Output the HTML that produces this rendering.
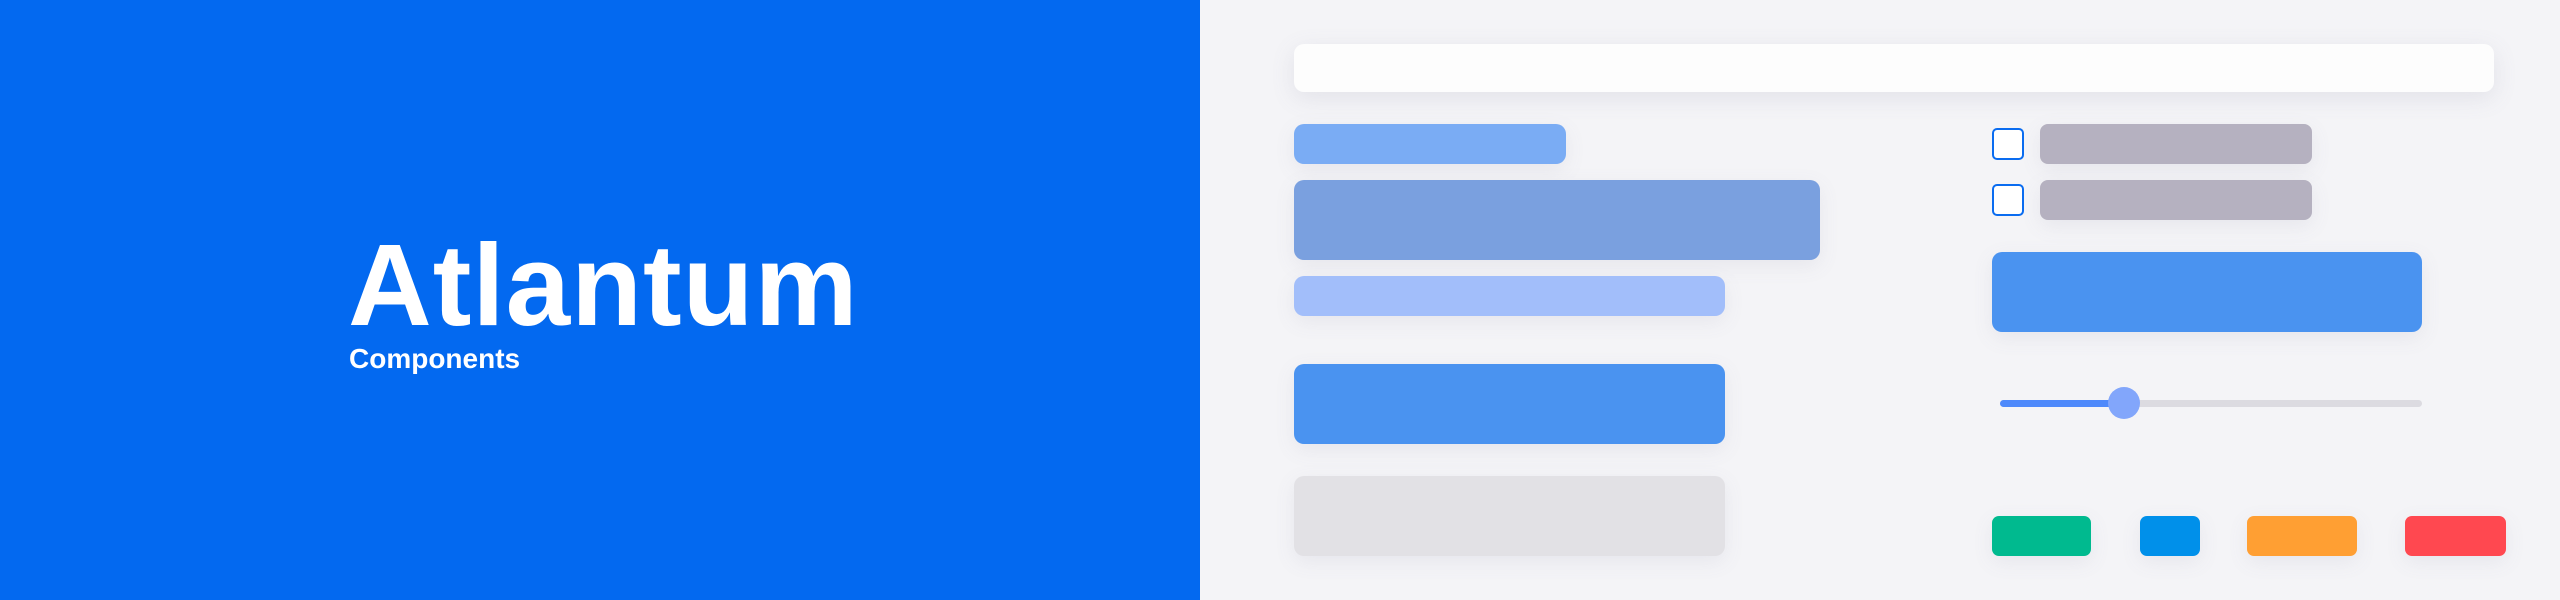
<!DOCTYPE html>
<html><head><meta charset="utf-8"><style>
html,body{margin:0;padding:0}
body{width:2560px;height:600px;position:relative;overflow:hidden;background:#f4f4f7;font-family:"Liberation Sans",sans-serif}
.l{position:absolute;left:0;top:0;width:1200px;height:600px;background:#0369f0}
.t{position:absolute;left:348px;top:220px;font-size:116px;font-weight:bold;color:#fff;line-height:130px;letter-spacing:1px}
.s{position:absolute;left:349px;top:342px;font-size:28px;font-weight:bold;color:#fff;line-height:34px}
.b{position:absolute;border-radius:10px;box-shadow:0 6px 20px rgba(120,120,150,0.10)}
.cb{position:absolute;left:1992px;width:28px;height:28px;border:2px solid #0a6cf0;border-radius:5px;background:#fff}
</style></head><body>
<div class="l"></div>
<div class="t">Atlantum</div>
<div class="s">Components</div>
<div class="b" style="left:1294px;top:44px;width:1200px;height:48px;background:#fdfdfd;box-shadow:0 6px 24px rgba(120,120,150,0.14)"></div>
<div class="b" style="left:1294px;top:124px;width:272px;height:40px;background:#7aacf4"></div>
<div class="b" style="left:1294px;top:180px;width:526px;height:80px;background:#7aa0df"></div>
<div class="b" style="left:1294px;top:276px;width:431px;height:40px;background:#a2befa"></div>
<div class="b" style="left:1294px;top:364px;width:431px;height:80px;background:#4a93f0"></div>
<div class="b" style="left:1294px;top:476px;width:431px;height:80px;background:#e2e1e5"></div>
<div class="cb" style="top:128px"></div>
<div class="cb" style="top:184px"></div>
<div class="b" style="left:2040px;top:124px;width:272px;height:40px;background:#b5b1c0;border-radius:8px"></div>
<div class="b" style="left:2040px;top:180px;width:272px;height:40px;background:#b5b1c0;border-radius:8px"></div>
<div class="b" style="left:1992px;top:252px;width:430px;height:80px;background:#4a93f0"></div>
<div style="position:absolute;left:2000px;top:400px;width:422px;height:7px;border-radius:4px;background:#dcdbe1"></div>
<div style="position:absolute;left:2000px;top:400px;width:124px;height:7px;border-radius:4px;background:#4e89fb"></div>
<div style="position:absolute;left:2108px;top:387px;width:32px;height:32px;border-radius:50%;background:#82a6fb"></div>
<div class="b" style="left:1992px;top:516px;width:99px;height:40px;background:#00ba8f;border-radius:7px"></div>
<div class="b" style="left:2140px;top:516px;width:60px;height:40px;background:#0090ea;border-radius:7px"></div>
<div class="b" style="left:2247px;top:516px;width:110px;height:40px;background:#ff9f33;border-radius:7px"></div>
<div class="b" style="left:2405px;top:516px;width:101px;height:40px;background:#ff4850;border-radius:7px"></div>
</body></html>
